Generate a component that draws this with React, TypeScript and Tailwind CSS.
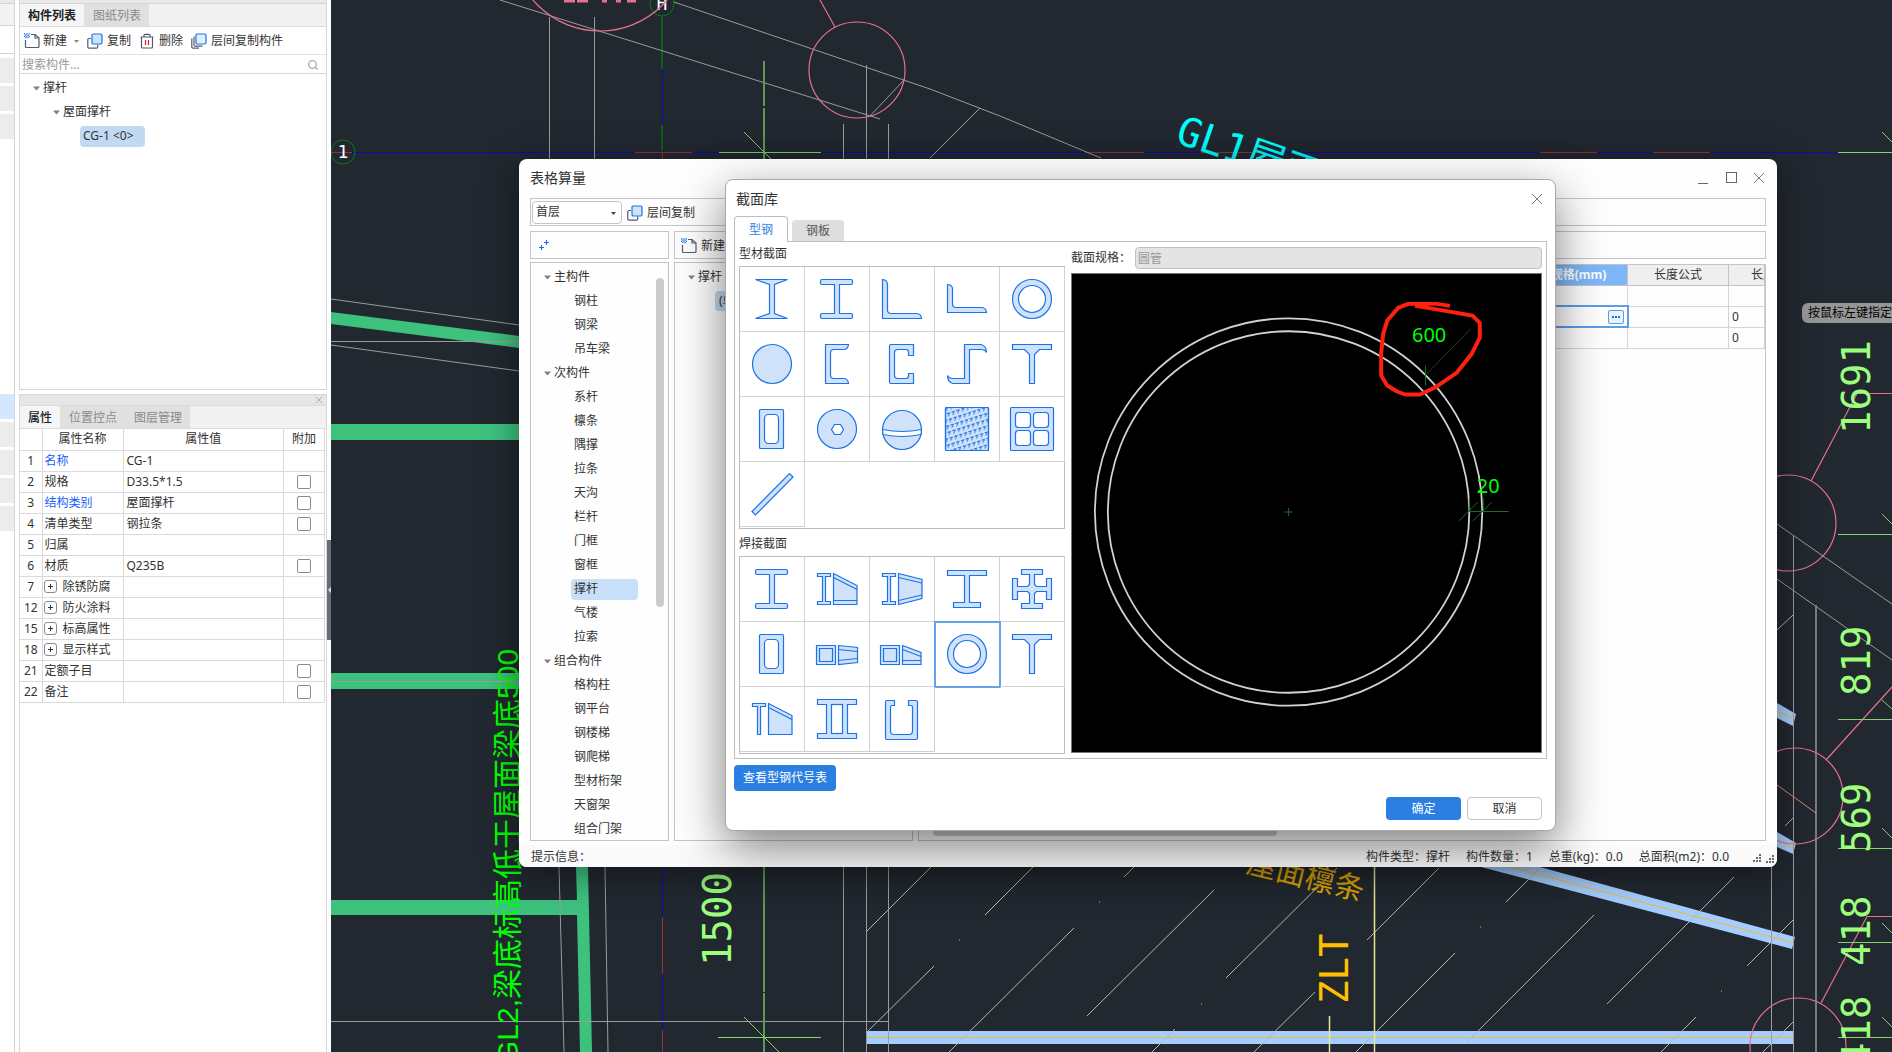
import { useState } from "react";
import type { ReactNode } from "react";
import clsx from "clsx";

// ------------------- data -------------------
interface PropertyRow {
  no: number;
  name: string;
  value?: string;
  link?: boolean;
  group?: boolean;
  check?: boolean;
}

const PROPERTIES: PropertyRow[] = [
  { no: 1, name: "名称", value: "CG-1", link: true },
  { no: 2, name: "规格", value: "D33.5*1.5", check: true },
  { no: 3, name: "结构类别", value: "屋面撑杆", link: true, check: true },
  { no: 4, name: "清单类型", value: "钢拉条", check: true },
  { no: 5, name: "归属" },
  { no: 6, name: "材质", value: "Q235B", check: true },
  { no: 7, name: "除锈防腐", group: true },
  { no: 12, name: "防火涂料", group: true },
  { no: 15, name: "标高属性", group: true },
  { no: 18, name: "显示样式", group: true },
  { no: 21, name: "定额子目", check: true },
  { no: 22, name: "备注", check: true },
];

const COMPONENT_TREE = [
  { title: "主构件", items: ["钢柱", "钢梁", "吊车梁"] },
  {
    title: "次构件",
    items: ["系杆", "檩条", "隅撑", "拉条", "天沟", "栏杆", "门框", "窗框", "撑杆", "气楼", "拉索"],
  },
  {
    title: "组合构件",
    items: ["格构柱", "钢平台", "钢楼梯", "钢爬梯", "型材桁架", "天窗架", "组合门架"],
  },
];

// ------------------- section shapes, 64x64 -------------------
const I_BEAM =
  "M17 12.5H46Q47.5 12.5 47.5 14V16Q47.5 17.5 46 17.5H34.5V46.5H46Q47.5 46.5 47.5 48V50Q47.5 51.5 46 51.5H17Q15.5 51.5 15.5 50V48Q15.5 46.5 17 46.5H29.5V17.5H17Q15.5 17.5 15.5 16V14Q15.5 12.5 17 12.5Z";
const TEE =
  "M12.5 12.5H51.5V17.5H39.5L34.5 22.5V51.5H29.5V22.5L24.5 17.5H12.5Z";
const SMALL_I = "M12.5 16.5H25.5V19.5H20.5V44.5H25.5V47.5H12.5V44.5H17.5V19.5H12.5Z";

const Ring = () => (
  <>
    <circle cx="32" cy="32" r="19.5" />
    <circle cx="32" cy="32" r="13.5" fill="#fff" />
  </>
);

const Tube = () => (
  <>
    <rect x="19.5" y="12.5" width="24" height="39" rx="1" />
    <rect x="24.5" y="17.5" width="14" height="29" rx="4" fill="#fff" />
  </>
);

const ROLLED: { name: string; art: ReactNode }[] = [
  {
    name: "工字钢",
    art: <path d="M15.5 12.5H47.5L34.5 17.5V46.5L47.5 51.5H15.5L29.5 46.5V17.5Z" />,
  },
  { name: "H型钢", art: <path d={I_BEAM} /> },
  {
    name: "等边角钢",
    art: <path d="M12.5 12.5Q17.5 13 17.5 18V43Q17.5 46.5 21 46.5H46Q51 46.5 51.5 51.5H12.5Z" />,
  },
  {
    name: "不等边角钢",
    art: <path d="M12.5 17.5Q17.5 18 17.5 22V37Q17.5 40.5 21 40.5H46Q51 40.5 51.5 45.5H12.5Z" />,
  },
  { name: "圆管", art: <Ring /> },
  { name: "圆钢", art: <circle cx="32" cy="32" r="19.5" /> },
  {
    name: "槽钢",
    art: (
      <path d="M20.5 12.5H43.5Q43 17.5 38 17.5H29Q25.5 17.5 25.5 21V43Q25.5 46.5 29 46.5H38Q43 46.5 43.5 51.5H20.5Z" />
    ),
  },
  {
    name: "C型钢",
    art: (
      <path d="M21 12.5H43.5V23.5H38.5V20Q38.5 17.5 36 17.5H28Q24.5 17.5 24.5 21V43Q24.5 46.5 28 46.5H36Q38.5 46.5 38.5 44V41.5H43.5V51.5H21Q19.5 51.5 19.5 50V14Q19.5 12.5 21 12.5Z" />
    ),
  },
  {
    name: "Z型钢",
    art: (
      <path d="M29.5 12.5H46Q51.5 14 51.5 20.5Q50 17.5 46 17.5H34.5V51.5H18Q12.5 50 12.5 43.5Q14 46.5 18 46.5H29.5Z" />
    ),
  },
  { name: "T型钢", art: <path d={TEE} /> },
  { name: "方管", art: <Tube /> },
  {
    name: "螺栓球",
    art: (
      <>
        <circle cx="32" cy="32" r="19.5" />
        <path d="M26.5 32.5L29.5 27.5H35.5L38.5 32.5L35.5 37.5H29.5Z" fill="#fff" />
      </>
    ),
  },
  {
    name: "焊接球",
    art: (
      <>
        <circle cx="32" cy="33" r="19.5" />
        <path d="M12.5 32.5Q32 36.5 51.5 32.5L51 37.5Q32 41.5 13 37.5Z" fill="#fff" />
      </>
    ),
  },
  {
    name: "花纹钢板",
    art: (
      <>
        <defs>
          <pattern id="tread" width="5" height="6" patternUnits="userSpaceOnUse" patternTransform="rotate(-18)">
            <path d="M1 1.500H3.800L1.500 4.500" fill="none" stroke="#1a73e8" strokeWidth="1.100" />
          </pattern>
        </defs>
        <rect x="10.5" y="10.5" width="43" height="43" rx="1" />
        <rect x="10.5" y="10.5" width="43" height="43" rx="1" fill="url(#tread)" />
      </>
    ),
  },
  {
    name: "格栅板",
    art: (
      <>
        <rect x="10.5" y="10.5" width="43" height="43" rx="1" />
        <g fill="#fff">
          <rect x="15.5" y="15.5" width="15" height="15" rx="3" />
          <rect x="33.5" y="15.5" width="15" height="15" rx="3" />
          <rect x="15.5" y="33.5" width="15" height="15" rx="3" />
          <rect x="33.5" y="33.5" width="15" height="15" rx="3" />
        </g>
      </>
    ),
  },
  { name: "钢绞线", art: <path d="M12 49.5L49.5 11.5L53 15L15.5 53Z" /> },
];

const WELDED: { name: string; art: ReactNode }[] = [
  { name: "焊接H型钢", art: <path d={I_BEAM} /> },
  {
    name: "单坡变截面H型钢",
    art: (
      <>
        <path d={SMALL_I} />
        <path d="M28.5 16.5L52 28.5V47.5H28.5Z" />
        <path d="M28.5 20.5L52 32.5M28.5 43.5H52" />
      </>
    ),
  },
  {
    name: "双坡变截面H型钢",
    art: (
      <>
        <path d={SMALL_I} />
        <path d="M28.5 16.5L52 22.5V41.5L28.5 47.5Z" />
        <path d="M28.5 20.5L52 26M28.5 43.5L52 38" />
      </>
    ),
  },
  {
    name: "不等翼缘H型钢",
    art: <path d="M12.5 13.5H51.5V18.5H34.5V45.5H45.5V50.5H18.5V45.5H29.5V18.5H12.5Z" />,
  },
  {
    name: "十字型钢",
    art: (
      <path d="M21.5 12.5H42.5V17.5H34.5V27.5L36.5 29.5H46.5V21.5H51.5V42.5H46.5V34.5H36.5L34.5 36.5V46.5H42.5V51.5H21.5V46.5H29.5V36.5L27.5 34.5H17.5V42.5H12.5V21.5H17.5V29.5H27.5L29.5 27.5V17.5H21.5Z" />
    ),
  },
  { name: "箱形截面", art: <Tube /> },
  {
    name: "双坡变截面箱形",
    art: (
      <>
        <path d="M11.5 23.5H30.5V42.5H11.5ZM14.5 26.5H27.5V39.5H14.5Z" />
        <path d="M33.5 23.5L52.5 25.5V40.5L33.5 42.5Z" />
        <path d="M33.5 27.5L52.5 29.5M33.5 38.5L52.5 36.5" />
      </>
    ),
  },
  {
    name: "单坡变截面箱形",
    art: (
      <>
        <path d="M10.5 23.5H29.5V42.5H10.5ZM13.5 26.5H26.5V39.5H13.5Z" />
        <path d="M32.5 23.5L51 30.5V42.5H32.5Z" />
        <path d="M32.5 27.5L51 34.5M32.5 38.5H51" />
      </>
    ),
  },
  { name: "焊接圆管", art: <Ring /> },
  { name: "焊接T型钢", art: <path d={TEE} /> },
  {
    name: "变截面T型钢",
    art: (
      <>
        <path d="M12.5 16.5H25.5V19.5H20.5V47.5H17.5V19.5H12.5Z" />
        <path d="M28.5 16.5L52 28.5V47.5H28.5Z" />
        <path d="M28.5 20.5L52 32.5" />
      </>
    ),
  },
  {
    name: "双腹板H型钢",
    art: (
      <>
        <path d="M12.5 12.5H51.5V17.5H42.5V46.5H51.5V51.5H12.5V46.5H21.5V17.5H12.5Z" />
        <rect x="26.5" y="17.5" width="11" height="29" fill="#fff" />
      </>
    ),
  },
  {
    name: "U型截面",
    art: (
      <path d="M17 13.5H24.5V18.5H22Q20.5 18.5 20.5 20V44Q20.5 47.5 24 47.5H39Q42.5 47.5 42.5 44V20Q42.5 18.5 41 18.5H38.5V13.5H46Q47.5 13.5 47.5 15V51Q47.5 52.5 46 52.5H17Q15.5 52.5 15.5 51V15Q15.5 13.5 17 13.5Z" />
    ),
  },
];

// ------------------- small icons -------------------
const NewIcon = () => (
  <svg viewBox="0 0 16 16" className="size-4 shrink-0" fill="none" stroke="#555b6e" strokeWidth="1.2">
    <path d="M1.5 7V13.5Q1.5 14.5 2.5 14.5H14Q15 14.5 15 13.5V5L11 1.5H7" />
    <path d="M11 1.5V5H15" />
    <path
      d="M0 .8H1.2M2.4.8H3.6M4.8.8H6M1.2 2.1H2.4M3.6 2.1H4.8M0 3.4H1.2M2.4 3.4H3.6M4.8 3.4H6M1.2 4.7H2.4M3.6 4.7H4.8"
      stroke="#1a73e8"
      strokeWidth="1.3"
    />
  </svg>
);

const CopyIcon = () => (
  <svg viewBox="0 0 16 16" className="size-4 shrink-0" strokeWidth="1.2">
    <path d="M4 5.5H2Q.8 5.5.8 6.700V14Q.8 15.2 2 15.2H9.5Q10.7 15.2 10.7 14V11.5" fill="none" stroke="#555b6e" />
    <rect x="5" y="1" width="10" height="10" rx="1.2" fill="#d0e2fa" stroke="#1a73e8" />
  </svg>
);

const LayersIcon = () => (
  <svg viewBox="0 0 16 16" className="size-4 shrink-0" strokeWidth="1.2">
    <path d="M.8 5.5V14Q.8 15.2 2 15.2H8M3 3.5V12Q3 13.2 4.2 13.2H11.5" fill="none" stroke="#555b6e" />
    <rect x="5" y="1" width="10" height="10" rx="1.2" fill="#e3effd" stroke="#1a73e8" />
  </svg>
);

const TrashIcon = () => (
  <svg viewBox="0 0 16 16" className="size-4 shrink-0" fill="none" stroke="#555b6e" strokeWidth="1.2">
    <path d="M1.5 4H14.5M5 4V2.3Q5 1.3 6 1.3H10Q11 1.3 11 2.3V4M2.5 4V14Q2.5 15 3.5 15H12.5Q13.5 15 13.5 14V4" />
    <path d="M6.5 7V12M9.5 7V12" stroke="#e02020" />
  </svg>
);

const Caret = () => (
  <svg viewBox="0 0 7 5" className="h-[5px] w-[7px] shrink-0">
    <path d="M0 .5H7L3.5 4.5Z" fill="#808080" />
  </svg>
);

const CloseIcon = ({ className }: { className: string }) => (
  <svg viewBox="0 0 12 12" className={className} fill="none" stroke="currentColor">
    <path d="M1 1L11 11M11 1L1 11" />
  </svg>
);

// ------------------- drawing behind the windows -------------------
const GRAY_LINES =
  "M500 0L880 119M674 2L930 89L1000 116L1101 158M905 79L870 116M980 108L930 158M549.5 17V159M594.5 17V159M866.5 65V159M843.5 124V159M888.5 124V159" +
  "M331 299L519 325M331 341.5H519M331 345L519 371M331 681.5H519M559 867L564 1052M605 867L608 1052M331 1021.5H888" +
  "M843.5 867V1052M866.5 867V1052M888.5 867V1052M1777 524L1892 604M1777 579L1892 660M1793.5 535V1052M1771.5 867V1052";

const HATCH =
  "M931 867L866 932M1033 867L985 915M1134 867L1124 877M934 966L866 1033M1074 928L949 1052M1214 890L1087 1016M1337 868L1226 978M1175 1029L1152 1052" +
  "M1315 992L1254 1052M1439 868L1367 940M1455 953L1356 1052M1594 915L1467 1042M1540 868L1506 902M1734 877L1607 1004M1696 1017L1661 1052M1793 920L1747 966" +
  "M1793 1022L1763 1052M1777 630L1793 615M1785 826L1793 818M959 940h1M1099 902h1M1201 1004h1M1480 927h1M1721 991h1";

const DIMENSIONS = [
  { text: "1691", y: 434 },
  { text: "819", y: 696 },
  { text: "569", y: 853 },
  { text: "418", y: 966 },
  { text: "418", y: 1066 },
];

function Drawing() {
  return (
    <svg
      viewBox="331 0 1561 1052"
      preserveAspectRatio="xMinYMin slice"
      className="absolute inset-0 h-full w-full font-['DejaVu_Sans_Mono','Noto_Sans_CJK_SC',monospace]"
      fill="none"
    >
      {/* beams */}
      <g fill="#3dc27e">
        <path d="M331 312L519 336V348L331 324ZM331 424H519V440H331ZM331 673H519V689H331ZM331 900H577L576 867H588L592 1052H580L577 915H331Z" />
      </g>
      <g fill="#a6cdff">
        <path d="M866 1031H1793V1044H866ZM1481 867H1540L1795 937L1792 949ZM1777 703L1796 714L1793 726L1777 718ZM1777 832L1796 843L1793 854L1777 847Z" />
      </g>
      <path d="M866 1037.5H1793M1511 867L1794 943M1777 711L1793 719M1777 840L1793 848" stroke="#f0bc28" />

      {/* axes */}
      <path d="M331 152.5H1838M662.5 69V125M662.5 867V917M662.5 974V1030" stroke="#0a0ac0" />
      <path d="M662 16V69M662 125V151" stroke="#0f5c1c" strokeWidth="2" />
      <path
        d="M331 152.5H352M635 152.5H692M1085 152.5H1144M1201 152.5H1260M1540 152.5H1597M1653 152.5H1710M662.5 153V159M662.5 917V974M662.5 1030V1052"
        stroke="#9c3038"
      />
      <path d={GRAY_LINES} stroke="#9a9c9e" />
      <path d="M1816 605V1052" stroke="#777b80" strokeWidth="2" />
      <path d={HATCH} stroke="#b4b6b8" />
      <path d="M1374.5 867V1052M1329.5 1016V1052" stroke="#e6e69a" strokeWidth="1.5" />

      {/* grid bubbles */}
      <g stroke="#0a7a14">
        <circle cx="662" cy="4" r="12" />
        <circle cx="343" cy="152" r="12" />
      </g>
      <g fill="#fff" fontSize="18" textAnchor="middle">
        <text x="662" y="10">H</text>
        <text x="343" y="158">1</text>
      </g>

      {/* callouts */}
      <g stroke="#e8708e" strokeWidth="1.2">
        <circle cx="600" cy="-57" r="88" />
        <circle cx="857" cy="70" r="48" />
        <circle cx="1788" cy="523" r="48" />
        <circle cx="1795" cy="796" r="48" />
        <circle cx="1798" cy="1046" r="48" />
        <path d="M820 0L835 27M1811 481L1857 393.5H1892M1826 760L1892 687M1821 1003L1867 916.5H1892" />
        <path d="M564 1H575M577 1H588M602 1H607M616 1H621M627 1H636" strokeWidth="3" />
      </g>
      <path d="M1777 785L1816 813" stroke="#d98b6a" />

      {/* dimension ticks */}
      <g stroke="#7fd46a">
        <path d="M764 61V106M764 108V159M764 867V992M764 993V1052" strokeWidth="2" stroke="#5b9a53" />
        <path d="M719 152.5H821M744 132L771 159M718 1037.5H821M744 1017L779 1052" />
        <path d="M1838 152.5H1892M1882 132L1892 142M1838 534.5H1892M1882 514L1892 524M1838 719.5H1892M1882 700L1892 709M1838 848.5H1892M1882 828L1892 838M1838 942.5H1892M1882 923L1892 933M1838 1037.5H1892M1882 1017L1892 1027" />
      </g>
      <g fill="#9cff7c" fontSize="39">
        {DIMENSIONS.map((d) => (
          <text key={d.y} transform={`translate(1870 ${d.y}) rotate(-90)`}>
            {d.text}
          </text>
        ))}
        <text transform="translate(731 966) rotate(-90)">1500</text>
      </g>
      <text
        transform="translate(518 1064) rotate(-90)"
        fill="#00ff00"
        fontSize="30"
        className="font-['Liberation_Sans','Noto_Sans_CJK_SC',sans-serif]"
      >
        GL2,梁底标高低于屋面梁底500
      </text>
      <text transform="translate(1174 142) rotate(19)" fill="#00ffff" fontSize="40">
        GL1屋面
      </text>
      <text transform="translate(1245 872) rotate(14)" fill="#dca400" fontSize="30">
        屋面檩条
      </text>
      <text transform="translate(1348 1004) rotate(-90)" fill="#ffc000" fontSize="39">
        ZLT
      </text>
    </svg>
  );
}

// ------------------- left dock -------------------
function SideStrip() {
  return (
    <div className="flex w-[15px] shrink-0 flex-col border-r border-[#d4d4d4]">
      <div className="h-1 border-b border-[#d4d4d4] bg-[#e8e8e8]" />
      <div className="h-[22px] border-b border-[#d4d4d4] bg-[#f2f2f2]" />
      <div className="mt-[27px] flex h-[341px] flex-col gap-[3px] border-t border-[#d4d4d4] pt-1">
        {[0, 1, 2].map((i) => (
          <div key={i} className="h-[25px] bg-[#ececec]" />
        ))}
      </div>
      <div className="flex flex-col gap-[3px]">
        <div className="h-[25px] bg-[#d3e7ff]" />
        {[0, 1, 2, 3].map((i) => (
          <div key={i} className="h-[25px] bg-[#ececec]" />
        ))}
      </div>
    </div>
  );
}

function DockTabs({ tabs, bold }: { tabs: string[]; bold?: boolean }) {
  return (
    <div className="flex h-[23px] border-b border-[#dcdcdc] bg-[#f1f1f1]">
      {tabs.map((t, i) => (
        <button
          key={t}
          className={clsx(
            "pt-[2px] pr-2",
            i === 0 ? "bg-[#f5f5f5] pl-2 text-[#222]" : "bg-[#e0e0e0] pl-[9px] text-[#8a8a8a]",
            i === 0 && (bold ? "font-bold" : "font-medium"),
          )}
        >
          {t}
        </button>
      ))}
    </div>
  );
}

function ComponentList() {
  return (
    <section className="flex h-[390px] flex-col border border-t-0 border-[#d6d6d6]">
      <div className="h-1 border-b border-[#d4d4d4] bg-[#e8e8e8]" />
      <DockTabs tabs={["构件列表", "图纸列表"]} bold />
      <div className="flex h-7 items-center border-b border-[#e2e2e2] pt-px pl-1">
        <button className="flex items-center gap-[3px]">
          <NewIcon />
          新建
        </button>
        <svg viewBox="0 0 5 3" className="mr-2 ml-[7px] h-[3px] w-[5px]">
          <path d="M0 0H5L2.5 3Z" fill="#888" />
        </svg>
        <button className="mr-2 flex items-center gap-1">
          <CopyIcon />
          复制
        </button>
        <button className="mr-2 flex items-center gap-1">
          <TrashIcon />
          删除
        </button>
        <button className="flex items-center gap-1">
          <LayersIcon />
          层间复制构件
        </button>
      </div>
      <div className="flex h-[19px] items-center border-b border-[#d6d6d6] pt-px pr-2 pl-[2px]">
        <input aria-label="搜索构件" placeholder="搜索构件..." className="min-w-0 flex-1 outline-none placeholder:text-[#9a9a9a]" />
        <svg viewBox="0 0 10 10" className="size-[10px]" fill="none" stroke="#aaa" strokeWidth="1.3">
          <circle cx="4.5" cy="4.5" r="3.800" />
          <path d="M7 7L9.5 9.5" />
        </svg>
      </div>
      <ul className="pt-[2px] leading-6">
        <li className="flex items-center gap-[3px] pl-[13px]">
          <Caret />
          撑杆
        </li>
        <li className="flex items-center gap-[3px] pl-[33px]">
          <Caret />
          屋面撑杆
        </li>
        <li className="flex h-6 items-center pl-[60px]">
          <span className="h-[21px] w-[65px] rounded-sm bg-[#c1d9f2] pl-[3px] leading-5">CG-1 &lt;0&gt;</span>
        </li>
      </ul>
    </section>
  );
}

function PropertyPanel() {
  return (
    <section className="mt-1 flex-1 border border-b-0 border-[#d6d6d6]">
      <div className="flex h-[11px] items-center justify-end border-b border-[#dcdcdc] bg-[#e6e6e6] pr-[3px] text-[#999]">
        <CloseIcon className="size-2" />
      </div>
      <DockTabs tabs={["属性", "位置控点", "图层管理"]} />
      <table className="w-[305px] table-fixed border-collapse text-left [&_td]:h-[21px] [&_td]:border-r [&_td]:border-b [&_td]:border-[#dadada] [&_td]:p-0 [&_th]:h-[21px] [&_th]:border-r [&_th]:border-b [&_th]:border-[#dadada] [&_th]:p-0 [&_th]:text-center [&_th]:font-normal">
        <colgroup>
          <col className="w-[22px]" />
          <col className="w-[81px]" />
          <col />
          <col className="w-[41px]" />
        </colgroup>
        <thead>
          <tr>
            <th />
            <th>属性名称</th>
            <th>属性值</th>
            <th>附加</th>
          </tr>
        </thead>
        <tbody>
          {PROPERTIES.map((p) => (
            <tr key={p.no}>
              <td className="text-center">{p.no}</td>
              <td>
                <div className={clsx("flex items-center", p.group ? "gap-[6px] pl-px" : "pl-[2px]", p.link && "text-[#1a5cff]")}>
                  {p.group && (
                    <button aria-label={`展开${p.name}`} className="flex size-[13px] items-center justify-center rounded-[3px] border border-[#8a8a8a]">
                      <svg viewBox="0 0 5 5" className="size-[5px]" stroke="#333">
                        <path d="M2.5 0V5M0 2.5H5" />
                      </svg>
                    </button>
                  )}
                  {p.name}
                </div>
              </td>
              <td>
                <span className="pl-[3px]">{p.value}</span>
              </td>
              <td>
                {p.check && (
                  <input
                    type="checkbox"
                    aria-label={`附加 ${p.name}`}
                    className="mx-auto block size-[14px] appearance-none rounded-xs border border-[#8a8a8a] bg-white"
                  />
                )}
              </td>
            </tr>
          ))}
        </tbody>
      </table>
    </section>
  );
}

// ------------------- quantity window -------------------
function CategoryTree() {
  const [selected, setSelected] = useState("撑杆");
  return (
    <div className="relative w-[139px] shrink-0 overflow-hidden border border-[#c4c4c8] pt-[2px] leading-6">
      <ul>
        {COMPONENT_TREE.map((g) => (
          <li key={g.title}>
            <div className="flex items-center gap-[3px] pl-[13px]">
              <Caret />
              {g.title}
            </div>
            <ul>
              {g.items.map((it) => (
                <li key={it} className="flex h-6 items-center pl-10">
                  <button
                    onClick={() => setSelected(it)}
                    className={clsx("h-[21px] w-[67px] rounded-sm pl-[3px] text-left leading-5", it === selected && "bg-[#c8dff9]")}
                  >
                    {it}
                  </button>
                </li>
              ))}
            </ul>
          </li>
        ))}
      </ul>
      <div className="absolute top-[15px] right-1 h-[329px] w-2 rounded-full bg-[#cbcbcb]" />
    </div>
  );
}

function QuantityTable() {
  return (
    <div className="relative mt-[2px] min-w-0 flex-1 overflow-hidden border border-[#c4c4c8]">
      <table className="w-full table-fixed border-collapse [&_td]:h-[21px] [&_td]:border-r [&_td]:border-b [&_td]:border-[#d4d4d4] [&_td]:p-0 [&_th]:h-5 [&_th]:border-r [&_th]:border-b [&_th]:border-[#c4c4c4] [&_th]:p-0">
        <colgroup>
          <col />
          <col className="w-[98px]" />
          <col className="w-[101px]" />
          <col className="w-9" />
        </colgroup>
        <thead className="bg-[#efefef]">
          <tr>
            <th />
            <th className="bg-[#7db7fa] font-bold text-white">规格(mm)</th>
            <th className="font-normal">长度公式</th>
            <th className="overflow-hidden pl-[22px]! text-left font-normal whitespace-nowrap">长度</th>
          </tr>
        </thead>
        <tbody>
          <tr>
            <td />
            <td />
            <td />
            <td />
          </tr>
          <tr>
            <td />
            <td className="outline-2 -outline-offset-1 outline-[#5b9de8]">
              <button aria-label="选择截面" className="float-right mr-[3px] flex h-[14px] w-4 items-center justify-center gap-px rounded-xs border border-[#5b9de8] bg-[#e8f2fe]">
                <i className="size-[2px] bg-[#1a73e8]" />
                <i className="size-[2px] bg-[#1a73e8]" />
                <i className="size-[2px] bg-[#1a73e8]" />
              </button>
            </td>
            <td />
            <td>
              <span className="pl-[3px]">0</span>
            </td>
          </tr>
          <tr>
            <td />
            <td />
            <td />
            <td>
              <span className="pl-[3px]">0</span>
            </td>
          </tr>
        </tbody>
      </table>
      <div className="absolute bottom-1 left-[14px] h-2 w-[344px] rounded-full bg-[#cbcbcb]" />
    </div>
  );
}

function QuantityWindow() {
  return (
    <section className="absolute top-[159px] right-[115px] bottom-[185px] left-[188px] flex flex-col overflow-hidden rounded-lg bg-[#fefefe] shadow-[0_6px_36px_rgba(0,0,0,0.45)]">
      <header className="flex h-[39px] items-center justify-between pr-3 pb-[2px] pl-[11px]">
        <h1 className="text-sm">表格算量</h1>
        <div className="flex items-center gap-4 text-[#777]">
          <button aria-label="最小化" className="flex h-3 w-3 items-end">
            <span className="h-px w-[10px] bg-[#666]" />
          </button>
          <button aria-label="最大化" className="size-[11px] border border-[#666]" />
          <button aria-label="关闭">
            <CloseIcon className="size-3" />
          </button>
        </div>
      </header>
      <div className="flex min-h-0 flex-1 flex-col px-[11px]">
        <div className="flex h-7 items-center border border-[#c4c4cc] pl-px">
          <label className="relative">
            <select aria-label="楼层" className="h-[23px] w-[90px] appearance-none rounded border border-[#c4c4c8] bg-white pl-[3px] outline-none">
              <option>首层</option>
            </select>
            <svg viewBox="0 0 5 3" className="absolute top-[11px] right-[6px] h-[3px] w-[5px]">
              <path d="M0 0H5L2.5 3Z" fill="#444" />
            </svg>
          </label>
          <button className="mt-px ml-[5px] flex items-center gap-1">
            <CopyIcon />
            层间复制
          </button>
        </div>
        <div className="mt-[5px] flex h-7 gap-[5px]">
          <div className="flex w-[139px] items-center border border-[#c4c4cc] pl-2">
            <svg viewBox="0 0 10 10" className="size-[10px]" stroke="#1a73e8" strokeWidth="1.2">
              <path d="M7.5 0V5M5 2.5H10M2.5 5V10M0 7.5H5" />
            </svg>
          </div>
          <div className="flex flex-1 items-center border border-[#c4c4cc] pl-[6px]">
            <button className="mt-px flex items-center gap-1">
              <NewIcon />
              新建
            </button>
          </div>
        </div>
        <div className="mt-[3px] flex min-h-0 flex-1 gap-[5px]">
          <CategoryTree />
          <ul className="w-[239px] shrink-0 border border-[#c4c4c8] pt-[2px] leading-6">
            <li className="flex items-center gap-[3px] pl-[13px]">
              <Caret />
              撑杆
            </li>
            <li className="pl-10">
              <span className="inline-block rounded-sm bg-[#c1d9f2] px-1 leading-5">(单构件)</span>
            </li>
          </ul>
          <QuantityTable />
        </div>
      </div>
      <footer className="mt-1 flex h-[22px] items-center bg-[#fafafa] pt-px pl-3">
        <span className="flex-1">提示信息：</span>
        <div className="flex gap-4">
          <span>构件类型：撑杆</span>
          <span>构件数量：1</span>
          <span>总重(kg)：0.0</span>
          <span>总面积(m2)：0.0</span>
        </div>
        <svg viewBox="0 0 22 10" className="mt-1 mr-[2px] ml-6 h-[10px] w-[22px]" fill="#667">
          <path d="M6 0h2v2h-2zM3 3h2v2h-2zM6 3h2v2h-2zM0 6h2v2h-2zM3 6h2v2h-2zM6 6h2v2h-2zM19 1h2v2h-2zM16 4h2v2h-2zM19 4h2v2h-2zM13 7h2v2h-2zM16 7h2v2h-2zM19 7h2v2h-2z" />
        </svg>
      </footer>
    </section>
  );
}

// ------------------- section library dialog -------------------
interface SectionGridProps {
  title: string;
  items: { name: string; art: ReactNode }[];
  selected: string;
  onSelect: (name: string) => void;
}

function SectionGrid({ title, items, selected, onSelect }: SectionGridProps) {
  return (
    <div>
      <h3 className="h-6 leading-6">{title}</h3>
      <div className="grid grid-cols-[repeat(5,65px)] border border-r-0 border-[#bebec2] pb-px shadow-[inset_-1px_0_0_#bebec2]">
        {items.map((s) => (
          <button
            key={s.name}
            aria-label={s.name}
            onClick={() => onSelect(s.name)}
            className={clsx(
              "border-r border-b border-[#d2d2d2]",
              s.name === selected && "outline-2 -outline-offset-1 outline-[#64a4e8]",
            )}
          >
            <svg viewBox="0 0 64 64" className="block size-16" fill="#d0e2fa" stroke="#1a73e8" strokeWidth="1.2">
              {s.art}
            </svg>
          </button>
        ))}
      </div>
    </div>
  );
}

function SectionPreview() {
  return (
    <svg
      viewBox="0 0 470 480"
      className="h-[480px] w-full border border-[#777] bg-black font-['Noto_Sans',sans-serif]"
      fill="none"
    >
      <g stroke="#d2d2d2" strokeWidth="1.8">
        <circle cx="217" cy="239" r="194.5" />
        <circle cx="217" cy="239" r="181.5" />
      </g>
      <g stroke="#1c6e22">
        <path d="M217 235V243M213 239H221M354.5 92V112M398 238.5H438M388 248L407 229M402 248L421 229M398.5 225V238M412.5 225V238" />
        <path d="M355 101L400 55" stroke="#184a1c" />
      </g>
      <g fill="#00ff00" fontSize="20">
        <text x="341" y="68">600</text>
        <text x="406" y="220">20</text>
      </g>
      <path
        d="M379 32L366 30H337L327 34L316 47L312 60L310 79V102L316 112L326 118L334 121H349L364 114L386 99L401 80L409 64V49L402 42L386 39L357 34L344 32"
        stroke="#ff2010"
        strokeWidth="4"
        strokeLinejoin="round"
      />
    </svg>
  );
}

function SectionLibrary() {
  const [selected, setSelected] = useState("焊接圆管");
  return (
    <section
      role="dialog"
      aria-label="截面库"
      className="absolute top-[179px] left-[394px] w-[831px] rounded-lg border border-[#a8a8a8] bg-white px-2 pb-[10px] shadow-[0_16px_48px_rgba(0,0,0,0.5)]"
    >
      <header className="flex h-9 items-center justify-between pt-px pr-1 pl-[2px]">
        <h2 className="text-sm">截面库</h2>
        <button aria-label="关闭" className="text-[#777]">
          <CloseIcon className="size-3" />
        </button>
      </header>
      <div className="flex items-end gap-1">
        <button className="z-10 -mb-px h-[26px] w-[54px] rounded-t border border-b-0 border-[#bebec2] bg-white text-[#2b7fe0]">型钢</button>
        <button className="h-[21px] w-[52px] rounded-t bg-[#dedede] text-[#555]">钢板</button>
      </div>
      <div className="flex gap-[6px] border border-[#bebec2] px-1 pb-1">
        <div>
          <SectionGrid title="型材截面" items={ROLLED} selected={selected} onSelect={setSelected} />
          <div className="h-[3px]" />
          <SectionGrid title="焊接截面" items={WELDED} selected={selected} onSelect={setSelected} />
        </div>
        <div className="flex min-w-0 flex-1 flex-col gap-1 pt-1">
          <label className="flex h-[23px] items-center gap-1">
            <span className="w-[60px]">截面规格：</span>
            <input disabled value="圆管" className="h-[22px] min-w-0 flex-1 rounded-sm border border-[#b9c3d4] bg-[#e4e4e4] px-[2px] text-[#999]" />
          </label>
          <SectionPreview />
        </div>
      </div>
      <button className="mt-[6px] block h-[26px] rounded bg-[#2c7fe2] px-[9px] text-white">查看型钢代号表</button>
      <div className="mt-[6px] flex justify-end gap-[6px] pr-[5px]">
        <button className="h-[23px] w-[75px] rounded-sm bg-[#2c7fe2] text-white">确定</button>
        <button className="h-[23px] w-[75px] rounded-sm border border-[#c4c4c8] bg-white">取消</button>
      </div>
    </section>
  );
}

export default function App() {
  return (
    <div
      lang="zh-CN"
      className="flex h-screen overflow-hidden bg-white font-['Noto_Sans','Noto_Sans_CJK_SC',sans-serif] text-xs leading-4 text-[#333]"
    >
      <SideStrip />
      <aside className="ml-1 flex w-[308px] shrink-0 flex-col">
        <ComponentList />
        <PropertyPanel />
      </aside>
      <div className="flex w-1 shrink-0 flex-col pt-[540px]">
        <button aria-label="收起面板" className="flex h-[100px] items-center justify-end bg-[#646f7a]">
          <svg viewBox="0 0 3 6" className="h-[6px] w-[3px]">
            <path d="M3 0V6L0 3Z" fill="#ddd" />
          </svg>
        </button>
      </div>
      <main className="relative min-w-0 flex-1 overflow-hidden bg-[#222830]">
        <Drawing />
        <div className="absolute top-[303px] right-0 w-[90px] overflow-hidden rounded-l-md bg-[#959595] pl-[6px] leading-5 whitespace-nowrap text-black">
          按鼠标左键指定
        </div>
        <QuantityWindow />
        <SectionLibrary />
      </main>
    </div>
  );
}
